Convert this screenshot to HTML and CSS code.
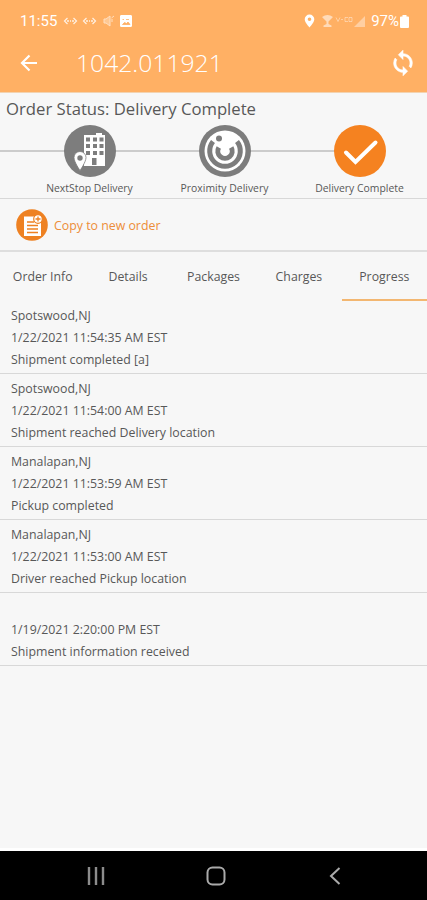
FILE: index.html
```html
<!DOCTYPE html>
<html lang="en">
<head>
<meta charset="utf-8">
<title>Order 1042.011921</title>
<link rel="stylesheet" href="styles.css">
</head>
<body>
<header class="header">
  <div class="statusbar">
    <span class="clock">11:55</span>
    <svg class="left-icons" width="70" height="14" viewBox="0 0 70 14" fill="none" stroke="#fff">
      <g stroke-width="1.3" opacity=".8"><path d="M4.500 4 1.500 7l3 3M10.500 4l3 3-3 3M4 7h2M7 7h1M9 7h2"/><path d="M23.500 4l-3 3 3 3M29.500 4l3 3-3 3M23 7h2M26 7h1M28 7h2"/></g>
      <g opacity=".6"><path d="M41 5h2l4-3v10l-4-3h-2z" fill="#fff" fill-opacity=".5"/><path d="M48.500 4l2.500-2M49 8V5"/></g>
      <rect x="57.500" y="1.500" width="11" height="11" rx=".5" fill="#fff"/><path d="M59.500 5.500H61M63 5.500h3M59.500 10.500l2-2 2 1 1.500-1.500 2 2.500z" stroke="#ffb064" fill="#ffb064" stroke-width=".8"/>
    </svg>
    <svg class="right-icons" width="62" height="14" viewBox="0 0 62 14" fill="#fff">
      <path fill-rule="evenodd" d="M5.500.500A4.800 4.800 0 0 0 .7 5.300C.7 8.500 5.500 13.500 5.500 13.500S10.300 8.500 10.300 5.300A4.800 4.800 0 0 0 5.500.500zm0 3a1.800 1.800 0 1 1 0 3.600 1.800 1.800 0 0 1 0-3.600z"/>
      <path d="M18 3q5.500-4 11 0l-4.500 4.500v2.500l3 1.500v1.500h-8v-1.500l3-1.500V7.500z" opacity=".55"/>
      <path d="M50 13h11V2z" opacity=".4"/>
      <path d="M32 3.500l2 4 2-4M37 5.500h2M44 3.500h-3v4h3M45 3.500h3v4h-3z" fill="none" stroke="#fff" stroke-width=".8" opacity=".5"/>
    </svg>
    <span class="percent">97%</span>
    <svg class="battery" width="9" height="13" viewBox="0 0 9 13"><path d="M2.500 0h4v1.500h1.500q1 0 1 1v9.500q0 1-1 1h-7q-1 0-1-1V2.500q0-1 1-1h1.500z" fill="#fff"/></svg>
  </div>
  <div class="toolbar">
    <svg class="back" width="18" height="18" viewBox="0 0 18 18" fill="none" stroke="#fff" stroke-width="2.2"><path d="M17 9H2M9.500 1.500 2 9l7.500 7.500"/></svg>
    <h1 class="title">1042.011921</h1>
    <svg class="sync" width="28" height="28" viewBox="0 0 24 24" fill="#fff" stroke="#fff" stroke-width=".5"><path d="M12 4V1L8 5l4 4V6c3.310 0 6 2.690 6 6 0 1.010-.25 1.970-.7 2.800l1.460 1.460A7.930 7.930 0 0 0 20 12c0-4.420-3.580-8-8-8zm0 14c-3.310 0-6-2.690-6-6 0-1.010.25-1.970.7-2.800L5.240 7.740A7.930 7.930 0 0 0 4 12c0 4.420 3.580 8 8 8v3l4-4-4-4z"/></svg>
  </div>
</header>
<main class="main">
  <section class="status">
    <h2 class="status-title">Order Status: Delivery Complete</h2>
    <div class="steps">
      <div class="step">
        <svg width="52" height="52" viewBox="0 0 52 52"><circle cx="26" cy="26" r="26" fill="#7d7d7d"/><path d="M20 10h12V8h6v2h3v31H20z" fill="#fff"/><path d="M22 12.500h4v4h-4zM29 12.500h4v4h-4zM35.500 12.500h4v4h-4zM22 19h4v4h-4zM29 19h4v4h-4zM35.500 19h4v4h-4zM22 26h4v4h-4zM29 26h4v4h-4zM35.500 26h4v4h-4zM28 33h4.500v7H28z" fill="#7d7d7d"/><path d="M16 26.500a6 6 0 0 0-6 6C10 37 16 45.500 16 45.500s6-8.500 6-13A6 6 0 0 0 16 26.500z" fill="#fff" stroke="#7d7d7d" stroke-width=".8"/><circle cx="16" cy="33" r="2.700" fill="#7d7d7d"/></svg>
        <span class="step-label">NextStop Delivery</span>
      </div>
      <div class="step">
        <svg width="52" height="52" viewBox="0 0 52 52"><circle cx="26" cy="26" r="26" fill="#7d7d7d"/><circle cx="26" cy="26" r="20.500" fill="#fff"/><g fill="none" stroke="#7d7d7d"><path d="M14 16.500a15.300 15.300 0 1 0 24 0" stroke-width="5"/><path d="M19.800 22.500a7.200 7.200 0 1 0 12.400 0" stroke-width="5"/></g><circle cx="20" cy="13.500" r="3" fill="#7d7d7d"/></svg>
        <span class="step-label">Proximity Delivery</span>
      </div>
      <div class="step">
        <svg width="52" height="52" viewBox="0 0 52 52"><circle cx="26" cy="26" r="26" fill="#f58220"/><path d="M12 27.500 21.500 37 41.500 17.500" fill="none" stroke="#fff" stroke-width="4" stroke-linecap="round"/></svg>
        <span class="step-label">Delivery Complete</span>
      </div>
    </div>
  </section>
  <section class="copy">
    <svg width="32" height="32" viewBox="0 0 32 32"><circle cx="16" cy="16" r="15.800" fill="#ee8122"/><path d="M8 7.500h13l4 5v14.500H8z" fill="#fff"/><path d="M11 13h7M11 16.500h11M11 20h11M11 23.500h11" stroke="#ee8122" stroke-width="1.300"/><circle cx="22" cy="10" r="4.300" fill="#fff" stroke="#ee8122" stroke-width="1.200"/><path d="M22 7.500v5M19.500 10h5" stroke="#ee8122" stroke-width="1.300"/></svg>
    <span class="copy-label">Copy to new order</span>
  </section>
  <nav class="tabs">
    <span class="tab">Order Info</span><span class="tab">Details</span><span class="tab">Packages</span><span class="tab">Charges</span><span class="tab active">Progress</span>
  </nav>
  <section class="events">
    <div class="event"><p>Spotswood,NJ</p><p class="date">1/22/2021 11:54:35 AM EST</p><p>Shipment completed [a]</p></div>
    <div class="event"><p>Spotswood,NJ</p><p class="date">1/22/2021 11:54:00 AM EST</p><p>Shipment reached Delivery location</p></div>
    <div class="event"><p>Manalapan,NJ</p><p class="date">1/22/2021 11:53:59 AM EST</p><p>Pickup completed</p></div>
    <div class="event"><p>Manalapan,NJ</p><p class="date">1/22/2021 11:53:00 AM EST</p><p>Driver reached Pickup location</p></div>
    <div class="event"><p></p><p class="date">1/19/2021 2:20:00 PM EST</p><p>Shipment information received</p></div>
  </section>
</main>
<footer class="navbar">
  <svg width="18" height="18" viewBox="0 0 18 18" stroke="#8c8c8c" stroke-width="2.4"><path d="M2 0v18M9 0v18M16 0v18"/></svg>
  <svg width="20" height="20" viewBox="0 0 20 20" fill="none" stroke="#aaa" stroke-width="2"><rect x="1.500" y="1.500" width="17" height="17" rx="5"/></svg>
  <svg width="18" height="18" viewBox="0 0 18 18" fill="none" stroke="#aaa" stroke-width="2"><path d="M13.500 1 5 9l8.500 8"/></svg>
</footer>
</body>
</html>
```
FILE: styles.css
```css
* { box-sizing: border-box; }
body {
  margin: 0;
  height: 900px;
  display: flex;
  flex-direction: column;
  overflow: hidden;
  background: #f7f7f7;
  color: #585858;
  font-family: "Open Sans", sans-serif;
}
h1, h2, p { margin: 0; font-weight: 400; }
svg { display: block; flex: none; }
.header {
  height: 93px;
  flex: none;
  background: #ffb064;
  border-bottom: 1px solid #f3d3b0;
  color: #fff;
}
.statusbar {
  height: 42px;
  padding: 0 18px 0 20px;
  display: flex;
  align-items: center;
  font-family: Roboto, sans-serif;
  font-size: 15px;
}
.clock { width: 43px; }
.right-icons { margin-left: auto; margin-right: 5px; }
.percent { font-size: 15px; }
.battery { margin-left: 1px; }
.toolbar {
  height: 42px;
  padding: 0 10px 0 20px;
  display: flex;
  align-items: center;
}
.title {
  margin-left: 38px;
  padding-bottom: 1px;
  font-size: 24.7px;
  line-height: 30px;
  font-weight: 300;
}
.sync { margin-left: auto; }
.main { flex: 1; border-bottom: 3px solid #fff; }
.status { height: 106px; border-bottom: 1px solid #d8d8d8; }
.status-title {
  height: 32px;
  padding-left: 6px;
  font-size: 16.7px;
  line-height: 32px;
}
.steps {
  display: grid;
  grid-template-columns: repeat(3, 135px);
  padding-left: 22px;
  background: linear-gradient(#ccc, #ccc) 0 25px / 360px 2px no-repeat;
}
.step {
  display: flex;
  flex-direction: column;
  align-items: center;
}
.step-label {
  margin-top: 4px;
  font-size: 10.4px;
  line-height: 14px;
  white-space: nowrap;
}
.copy {
  height: 53px;
  padding-left: 16px;
  display: flex;
  align-items: center;
  gap: 6px;
  border-bottom: 2px solid #dedede;
  color: #ed8d38;
  font-size: 12.35px;
}
.copy-label { padding-top: 1px; }
.tabs {
  height: 49px;
  display: grid;
  grid-template-columns: repeat(5, 1fr);
  text-align: center;
  font-size: 12.3px;
}
.tab {
  height: 49px;
  padding-top: 2px;
  line-height: 46px;
}
.active { border-bottom: 2px solid #f3b771; }
.event {
  height: 73px;
  padding: 4px 0 0 11px;
  border-bottom: 1px solid #d8d8d8;
  font-size: 12.35px;
}
.event p { height: 22px; line-height: 22px; }
.navbar {
  height: 49px;
  flex: none;
  padding: 0 83px 0 87px;
  display: flex;
  align-items: center;
  justify-content: space-between;
  background: #000;
}
```
